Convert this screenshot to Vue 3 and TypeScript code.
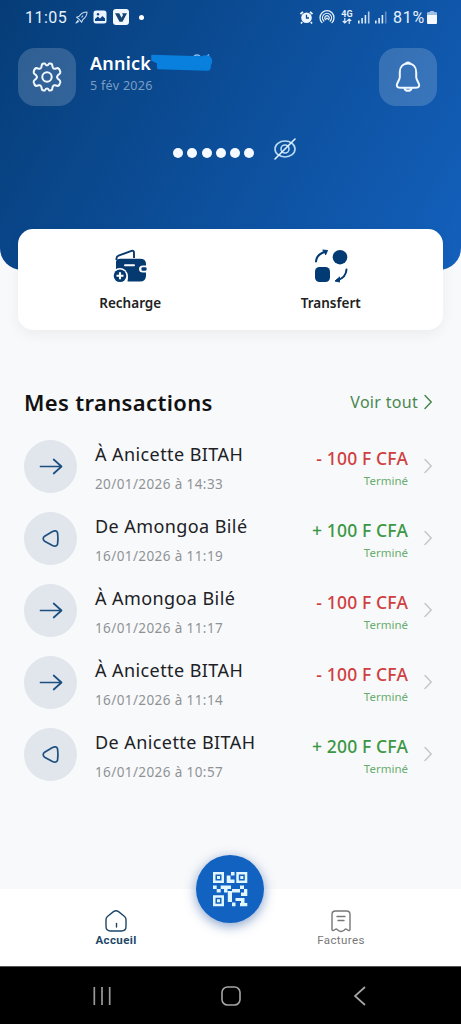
<script setup lang="ts">
interface Transaction {
  id: number
  name: string
  date: string
  amount: string
  incoming: boolean
}

const transactions: Transaction[] = [
  { id: 1, name: 'À Anicette BITAH', date: '20/01/2026 à 14:33', amount: '- 100 F CFA', incoming: false },
  { id: 2, name: 'De Amongoa Bilé', date: '16/01/2026 à 11:19', amount: '+ 100 F CFA', incoming: true },
  { id: 3, name: 'À Amongoa Bilé', date: '16/01/2026 à 11:17', amount: '- 100 F CFA', incoming: false },
  { id: 4, name: 'À Anicette BITAH', date: '16/01/2026 à 11:14', amount: '- 100 F CFA', incoming: false },
  { id: 5, name: 'De Anicette BITAH', date: '16/01/2026 à 10:57', amount: '+ 200 F CFA', incoming: true },
]
</script>

<template>
  <div class="screen">
    <header class="hero">
      <div class="status">
        <div class="status-left">
          <span class="clock">11:05</span>
          <svg class="i-rocket" width="13" height="13" viewBox="0 0 13 13" fill="none" stroke="#c3d9ef" stroke-width="1.1" stroke-linejoin="round">
            <path d="M12 1C8.500 1 6 2.500 4.200 5.200L1.600 6.200L3.400 7.600L5.400 9.600L6.600 11.300L7.900 8.500C10.500 6.700 12 4.500 12 1Z" />
            <path d="M3.200 9L1 12L4 10.200M8 4.600L6.500 6.500" />
          </svg>
          <svg class="i-image" width="14" height="14" viewBox="0 0 14 14">
            <rect x="0.500" y="0.500" width="13" height="13" rx="2.500" fill="#eaf4ff" />
            <path d="M2 11V9L4.800 6.500L7 8.500L9.500 6L12 8.500V11Z" fill="#0a4282" />
            <circle cx="5" cy="4.200" r="1.200" fill="#0a4282" />
          </svg>
          <svg class="i-app" width="16" height="16" viewBox="0 0 16 16">
            <rect width="16" height="16" rx="3" fill="#f1f8ff" />
            <path d="M2 4.200H6.200L8.500 8.800L10 6L9 4.200H14L9.500 12.800H6.500Z" fill="#164574" />
          </svg>
          <span class="status-dot"></span>
        </div>
        <div class="status-right">
          <svg width="13" height="13" viewBox="0 0 13 13">
            <path d="M0.500 3L3 0.800M12.500 3L10 0.800M2.200 11L1 12.500M10.800 11L12 12.500" stroke="#eef6ff" stroke-width="1.700" />
            <circle cx="6.500" cy="6.800" r="5.300" fill="#eef6ff" />
            <path d="M6.500 3.800V7H9" fill="none" stroke="#0b4a91" stroke-width="1.300" />
          </svg>
          <svg class="i-hotspot" width="16" height="14" viewBox="0 0 16 14" fill="none" stroke="#e4f0fc" stroke-width="1.300" stroke-linecap="round">
            <path d="M3 12.600A7 7 0 1 1 13 12.600M4.800 11A4.500 4.500 0 1 1 11.200 11M6.500 9.500A2.200 2.200 0 1 1 9.500 9.500" />
            <circle cx="8" cy="8.500" r="1" fill="#e4f0fc" stroke="none" />
          </svg>
          <span class="net">
            <span class="net-label">4G</span>
            <svg width="10" height="6" viewBox="0 0 10 6" fill="none" stroke="#e4f0fc" stroke-width="1.200">
              <path d="M2.800 0V5M0.800 3L2.800 5L4.800 3M7.200 6V1M5.200 3L7.200 1L9.200 3" />
            </svg>
          </span>
          <svg class="i-signal" width="12" height="13" viewBox="0 0 12 13" fill="#dfecf9">
            <rect x="0" y="9.500" width="1.600" height="3" /><rect x="3.300" y="7" width="1.600" height="5.500" />
            <rect x="6.600" y="4" width="1.600" height="8.500" /><rect x="9.900" y="0.500" width="1.600" height="12" opacity="0.800" />
          </svg>
          <svg class="i-signal2" width="12" height="13" viewBox="0 0 12 13" fill="#dfecf9">
            <rect x="0" y="9.500" width="1.600" height="3" /><rect x="3.300" y="7" width="1.600" height="5.500" />
            <rect x="6.600" y="4" width="1.600" height="8.500" /><rect x="9.900" y="0.500" width="1.600" height="12" opacity="0.400" />
          </svg>
          <span class="percent">81%</span>
          <svg class="i-battery" width="10" height="13" viewBox="0 0 10 13">
            <path d="M3 0H7V1.500H9Q10 1.500 10 2.500V12Q10 13 9 13H1Q0 13 0 12V2.500Q0 1.500 1 1.500H3Z" fill="#f4faff" />
            <path d="M0 2.500Q0 1.500 1 1.500H3V0H7V1.500H9Q10 1.500 10 2.500V4H0Z" fill="#9fc0e3" />
          </svg>
        </div>
      </div>

      <div class="profile">
        <button class="tile" aria-label="Paramètres">
          <svg width="32" height="32" viewBox="0 0 32 32" fill="none" stroke="#f0f8ff" stroke-width="2" stroke-linejoin="round">
            <path d="M11 3.200Q12 2.200 13.800 2.600Q16 6.400 18.200 2.600Q20 2.200 21 3.200L21.700 6.300Q22.300 8.200 24.200 7.700L26.800 7Q28.600 7.600 29.300 10.800Q29.500 12.200 28.400 13L26.800 14.300Q25.300 16 26.800 17.700L28.400 19Q29.500 19.900 29.300 21.200Q28.600 24.400 26.800 25L24.200 24.300Q22.300 23.900 21.700 25.700L21 28.800Q20 29.800 18.200 29.400Q16 25.600 13.800 29.400Q12 29.800 11 28.800L10.300 25.700Q9.700 23.900 7.800 24.300L5.200 25Q3.400 24.400 2.700 21.200Q2.500 19.900 3.600 19L5.200 17.700Q6.700 16 5.200 14.300L3.600 13Q2.500 12.200 2.700 10.800Q3.400 7.600 5.200 7L7.800 7.700Q9.700 8.200 10.300 6.300Z" />
            <circle cx="16" cy="16" r="4.700" />
          </svg>
        </button>
        <div class="who">
          <div class="name">Annick
            <svg class="scribble" width="62" height="21" viewBox="0 0 62 21">
              <path d="M43 4Q46 1.800 49 4M56 4.500L58 2.500" stroke="#7fbdf0" stroke-width="1.500" fill="none" />
              <path d="M1 3.500Q24 4 50 5Q58 2.500 60 7Q61 11 59 13Q60 18 56 18Q30 17 7 16.500Q6 13 7 11L1 8Z" fill="#0a80de" stroke="#0a80de" stroke-width="1.500" stroke-linejoin="round" />
            </svg>
          </div>
          <div class="today">5 fév 2026</div>
        </div>
        <button class="tile" aria-label="Notifications">
          <svg width="28" height="32" viewBox="0 0 28 32" fill="none" stroke="#f0f8ff" stroke-width="2" stroke-linejoin="round" stroke-linecap="round">
            <path d="M14 2.500C8.500 2.500 5.800 6.500 5.800 11V16C5.800 19.500 2.800 21.500 2.800 24.300C2.800 26.500 5 26.800 7 26.800H21C23 26.800 25.200 26.500 25.200 24.300C25.200 21.500 22.200 19.500 22.200 16V11C22.200 6.500 19.500 2.500 14 2.500Z" />
            <path d="M12 2.300Q14 0.700 16 2.300M10.500 27.200Q11 29.800 14 29.800Q17 29.800 17.500 27.200" />
          </svg>
        </button>
      </div>

      <div class="balance">
        <span v-for="n in 6" :key="n" class="dot"></span>
        <svg class="eye" width="24" height="24" viewBox="0 0 24 24" fill="none" stroke="#b9dcf5" stroke-width="1.600" stroke-linecap="round">
          <path d="M2 12C2 7.500 6.500 4 12 4S22 7.500 22 12S17.500 20 12 20S2 16.500 2 12Z" />
          <circle cx="12" cy="12" r="4" />
          <path d="M22 2L2 22" stroke="#e4f3ff" />
        </svg>
      </div>
    </header>

    <section class="actions">
      <div class="action">
        <svg width="34" height="34" viewBox="0 0 34 34">
          <path d="M3.500 11V9.500Q3.500 7.500 5.500 6.700L18.500 1.800Q21 1.200 21 3.800V9" fill="none" stroke="#073a70" stroke-width="1.900" />
          <path d="M3 12Q4 9.800 7 9.800H27Q33 9.800 33 15V16.500H30Q26 16.500 26 20Q26 23.500 30 23.500H33V26.500Q33 32.500 27 32.500H14.500Q15.500 29.500 14.500 25Q11.500 19 3 20Z" fill="#043a70" />
          <rect x="28.500" y="18.300" width="5" height="3.500" rx="1" fill="#043a70" />
          <path d="M12 16.200H21" stroke="#fff" stroke-width="2" stroke-linecap="round" />
          <circle cx="7" cy="26.700" r="7.700" fill="#fff" />
          <circle cx="7" cy="26.700" r="6.300" fill="#043a70" />
          <path d="M7 23.200V30.200M3.500 26.700H10.500" stroke="#fff" stroke-width="2.100" />
        </svg>
        <span>Recharge</span>
      </div>
      <div class="action">
        <svg width="34" height="34" viewBox="0 0 34 34">
          <circle cx="26" cy="8.200" r="7.300" fill="#023a73" />
          <rect x="1" y="18" width="15" height="15" rx="4.500" fill="#023a73" />
          <path d="M2 12.500Q2.500 5.500 11 2.800M32.500 20.500Q32 28.500 23.500 31.300" fill="none" stroke="#023a73" stroke-width="2" stroke-linecap="round" />
          <path d="M8.500 1L13.500 1.500L11.500 6M26 27.800L21 32L26 33" fill="#023a73" stroke="#023a73" stroke-linejoin="round" />
        </svg>
        <span>Transfert</span>
      </div>
    </section>

    <main class="transactions">
      <div class="heading">
        <h2>Mes transactions</h2>
        <a class="all">
          <span>Voir tout</span>
          <svg width="10" height="16" viewBox="0 0 10 16" fill="none" stroke="#4a8750" stroke-width="1.500" stroke-linecap="round"><path d="M2 1.500L8.200 8L2 14.500" /></svg>
        </a>
      </div>
      <ul class="list">
        <li v-for="t in transactions" :key="t.id" class="row">
          <span class="badge">
            <svg v-if="t.incoming" width="26" height="26" viewBox="0 0 26 26" fill="none" stroke="#20507f" stroke-width="1.700" stroke-linejoin="round">
              <path d="M6.600 11.200L14.500 6.500Q18.600 4.600 19.600 8Q20.300 13.500 19.600 19Q18.600 22.300 14.500 20.500L6.600 16.300Q3.800 13.700 6.600 11.200Z" />
            </svg>
            <svg v-else width="26" height="26" viewBox="0 0 26 26" fill="none" stroke="#1b4f80" stroke-width="1.700" stroke-linecap="round" stroke-linejoin="round">
              <path d="M2.500 13.500H23.500M15.700 6.500L23.500 13.500L15.700 20.500" />
            </svg>
          </span>
          <span class="party">
            <span class="party-name">{{ t.name }}</span>
            <span class="party-date">{{ t.date }}</span>
          </span>
          <span class="value">
            <span class="amount" :class="{ credit: t.incoming }">{{ t.amount }}</span>
            <span class="state">Terminé</span>
          </span>
          <svg class="chev" width="10" height="16" viewBox="0 0 10 16" fill="none" stroke="#c2c5c9" stroke-width="1.400" stroke-linecap="round"><path d="M2 1.500L8.200 8L2 14.500" /></svg>
        </li>
      </ul>
    </main>

    <nav class="tabs">
      <div class="tab active">
        <svg width="24" height="24" viewBox="0 0 24 24" fill="none" stroke="#1c4668" stroke-width="1.400" stroke-linejoin="round" stroke-linecap="round">
          <path d="M2 10.500Q2 8.500 3.700 7.200L9.500 2.600Q12 0.800 14.500 2.600L20.300 7.200Q22 8.500 22 10.500V17.500Q22 22 17.500 22H6.500Q2 22 2 17.500Z" />
          <path d="M12.500 14.500V18" />
        </svg>
        <span>Accueil</span>
      </div>
      <button class="scan" aria-label="Scanner">
        <svg width="36" height="36" viewBox="0 0 36 36" fill="#e2f6ff" fill-rule="evenodd">
          <path d="M1 1H12V12H1ZM3.500 3.500V9.500H9.500V3.500ZM5 5H8V8H5Z" />
          <path d="M24.300 1H35.300V12H24.300ZM26.800 3.500V9.500H32.800V3.500ZM28.300 5H31.300V8H28.300Z" />
          <path d="M1 24.300H12V35.300H1ZM3.500 26.800V32.800H9.500V26.800ZM5 28.300H8V31.300H5Z" />
          <path d="M19 1H22.500V4.500H19ZM14.700 4.500H18.500V8.500H22.500V12H14.700ZM1 14.500H4.700V18H1ZM4.700 18H8.700V21.500H4.700ZM8.700 14.500H19V18H15.500V21.500H12V18H8.700ZM15.800 20H20V31H15.800ZM20 18H28V21.500H20ZM28 14.500H32V18H28ZM32 18H35.300V25H29V21.500H32ZM23.500 27H32.500V32H35.300V35.300H28V32H29V30H23.500ZM20 31.500H23.500V35.300H20Z" />
        </svg>
      </button>
      <div class="tab">
        <svg width="24" height="24" viewBox="0 0 24 24" fill="none" stroke="#777" stroke-width="1.400" stroke-linejoin="round" stroke-linecap="round">
          <path d="M3 5.500Q3 2 6.500 2H17.500Q21 2 21 5.500V20.500Q20.500 22.800 17.500 20.300Q16.500 19.500 15 21.300Q12 23.800 9 21.300Q7.500 19.500 6.500 20.300Q3.500 22.800 3 20.500ZM8 7.500H16M9 11.500H15" />
        </svg>
        <span>Factures</span>
      </div>
    </nav>

    <footer class="system">
      <svg width="20" height="20" viewBox="0 0 20 20" stroke="#999" stroke-width="1.700"><path d="M2.300 1V19M10 1V19M17.700 1V19" /></svg>
      <svg width="20" height="20" viewBox="0 0 20 20" fill="none" stroke="#a6a6a6" stroke-width="1.600"><rect x="1" y="1" width="18" height="18" rx="5.500" /></svg>
      <svg width="20" height="20" viewBox="0 0 20 20" fill="none" stroke="#a6a6a6" stroke-width="1.700"><path d="M15 1L5 10L15 19" /></svg>
    </footer>
  </div>
</template>

<style>
body {
  margin: 0;
  background: #f8f9fb;
}
</style>

<style scoped>
.screen {
  width: 461px;
  height: 1024px;
  display: flex;
  flex-direction: column;
  background: #f8f9fb;
  font-family: "Noto Sans", "Open Sans", sans-serif;
  overflow: hidden;
}
button {
  border: 0;
  padding: 0;
}
svg {
  display: block;
  flex: none;
}
.hero {
  flex: none;
  height: 270px;
  border-radius: 0 0 22px 22px;
  background: linear-gradient(120deg, #063d78 0%, #1360bc 100%);
  color: #fff;
}
.status {
  height: 34px;
  display: flex;
  align-items: center;
  justify-content: space-between;
  padding: 0 24px 0 25px;
  font-family: Roboto, sans-serif;
  font-size: 16px;
  color: #e6f1fc;
}
.status-left,
.status-right {
  display: flex;
  align-items: center;
}
.clock {
  width: 42px;
  letter-spacing: 0.5px;
}
.i-rocket {
  margin-left: 8px;
}
.i-image {
  margin-left: 5px;
}
.i-app {
  margin-left: 6px;
}
.status-dot {
  width: 5px;
  height: 5px;
  margin-left: 10px;
  border-radius: 50%;
  background: #fff;
}
.i-hotspot {
  margin-left: 6px;
}
.net {
  margin-left: 6px;
  display: flex;
  flex-direction: column;
  align-items: center;
  width: 12px;
}
.net-label {
  font-size: 9px;
  font-weight: 700;
  line-height: 8px;
}
.i-signal {
  margin-left: 5px;
}
.i-signal2 {
  margin-left: 5px;
}
.percent {
  margin-left: 6px;
  width: 33px;
  letter-spacing: 0.7px;
  white-space: nowrap;
}
.i-battery {
  margin-left: 1px;
}
.profile {
  display: flex;
  align-items: flex-start;
  padding: 14px 24px 0 18px;
}
.tile {
  width: 58px;
  height: 58px;
  border-radius: 17px;
  background: rgba(255, 255, 255, 0.17);
  display: flex;
  align-items: center;
  justify-content: center;
}
.who {
  flex: 1;
  padding-left: 14px;
}
.name {
  display: flex;
  align-items: center;
  height: 29px;
  font-size: 18px;
  font-weight: 600;
  letter-spacing: 0.2px;
}
.today {
  font-size: 12.500px;
  line-height: 17px;
  color: #7c9dc2;
  letter-spacing: 0.300px;
}
.balance {
  display: flex;
  align-items: center;
  gap: 4.300px;
  padding: 31px 0 0 173px;
}
.dot {
  width: 10px;
  height: 10px;
  margin-top: 8px;
  border-radius: 50%;
  background: #f4faff;
}
.eye {
  margin-left: 14px;
}
.actions {
  flex: none;
  height: 101px;
  margin: -41px 18px 0;
  border-radius: 15px;
  background: #fff;
  box-shadow: 0 5px 14px rgba(0, 0, 0, 0.05);
  display: flex;
  padding: 0 12px;
  box-sizing: border-box;
}
.action {
  flex: 1;
  display: flex;
  flex-direction: column;
  align-items: center;
  padding-top: 20px;
  font-size: 13.500px;
  font-weight: 600;
  line-height: 20px;
  color: #222;
}
.action span {
  margin-top: 10px;
}
.transactions {
  flex: 1;
  padding: 54px 28px 0 24px;
}
.heading {
  display: flex;
  align-items: center;
  justify-content: space-between;
  height: 36px;
}
h2 {
  margin: 0;
  font-size: 22px;
  font-weight: 600;
  letter-spacing: 0.350px;
  color: #111;
}
.all {
  display: flex;
  align-items: center;
  gap: 5px;
  font-size: 16px;
  line-height: 20px;
  letter-spacing: 0.300px;
  color: #4a8750;
}
.list {
  list-style: none;
  margin: 10px 0 0;
  padding: 0;
}
.row {
  height: 72px;
  display: flex;
  align-items: center;
}
.badge {
  width: 53px;
  height: 53px;
  border-radius: 50%;
  background: #e1e6ed;
  display: flex;
  align-items: center;
  justify-content: center;
}
.party {
  flex: 1;
  display: flex;
  flex-direction: column;
  padding: 5px 0 0 18px;
}
.party-name {
  font-size: 18px;
  line-height: 26px;
  letter-spacing: 0.420px;
  color: #202124;
}
.party-date {
  margin-top: 5px;
  font-size: 13.500px;
  line-height: 24px;
  letter-spacing: 0.400px;
  color: #909396;
}
.value {
  display: flex;
  flex-direction: column;
  align-items: flex-end;
  padding: 5px 15px 0 0;
}
.amount {
  font-size: 17.500px;
  font-weight: 500;
  line-height: 24px;
  letter-spacing: 0.150px;
  color: #cf3f40;
}
.amount.credit {
  color: #3c9744;
}
.state {
  margin-top: 1px;
  font-size: 11.500px;
  line-height: 20px;
  color: #68ad6d;
}
.tabs {
  flex: none;
  height: 77px;
  background: #fff;
  display: flex;
  justify-content: space-between;
  padding: 0 75px 0 71px;
}
.tab {
  width: 90px;
  display: flex;
  flex-direction: column;
  align-items: center;
  padding-top: 20px;
  font-family: Roboto, sans-serif;
  font-size: 11.500px;
  line-height: 14px;
  letter-spacing: 0.4px;
  color: #777;
}
.tab.active {
  font-weight: 700;
  color: #1c4668;
}
.scan {
  width: 68px;
  height: 68px;
  margin-top: -34px;
  margin-left: 3px;
  border-radius: 50%;
  background: #1262c2;
  box-shadow: 0 3px 12px rgba(18, 70, 150, 0.5);
  display: flex;
  align-items: center;
  justify-content: center;
}
.system {
  flex: none;
  height: 58px;
  box-sizing: border-box;
  background: #000;
  border-top: 1px solid #555;
  display: flex;
  align-items: center;
  justify-content: space-between;
  padding: 0 91px 0 92px;
}
</style>
